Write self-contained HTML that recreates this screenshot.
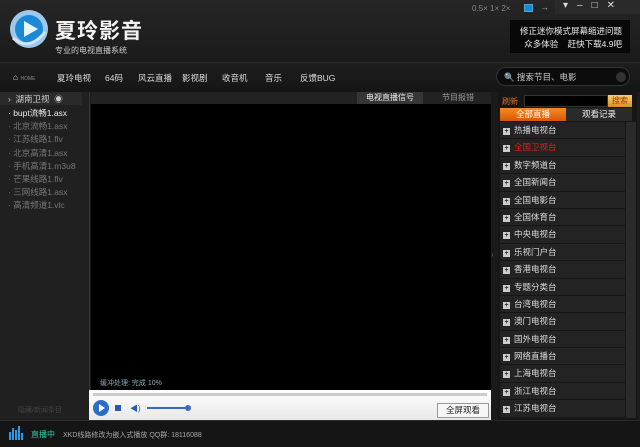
<!DOCTYPE html>
<html><head><meta charset="utf-8"><style>
*{margin:0;padding:0;box-sizing:border-box}
body{width:640px;height:447px;background:#1c1c1c;font-family:"Liberation Sans","Noto Sans CJK SC",sans-serif;color:#ddd;position:relative;overflow:hidden;font-size:9px}
.a{position:absolute}
.n{position:absolute;top:72px;font-size:8.5px;color:#ddd;white-space:nowrap}
</style></head><body>
<div class="a" style="left:0;top:0;width:640px;height:62px;background:linear-gradient(#262626,#1a1a1a)"></div>
<svg class="a" style="left:8px;top:8px" width="42" height="42"><circle cx="21" cy="21" r="19" fill="#9fc8e8"/><circle cx="21" cy="21" r="14" fill="#1a8ad8"/><path d="M16 13 L30 21 L16 29Z" fill="#e8f4ff"/><path d="M5 30 Q21 44 37 24" stroke="#cfe6f8" stroke-width="3" fill="none"/></svg>
<div class="a" style="left:55px;top:15px;font-size:21px;color:#f2f2f2;font-weight:bold;letter-spacing:1px">夏玲影音</div>
<div class="a" style="left:55px;top:45px;font-size:8px;color:#ccc">专业的电视直播系统</div>
<div class="a" style="left:472px;top:4px;font-size:8px;color:#888">0.5× 1× 2×</div>
<div class="a" style="left:524px;top:4px;width:9px;height:8px;background:#1a88d8;border:1px solid #5ac"></div>
<div class="a" style="left:540px;top:2px;color:#aaa;font-size:9px">→</div>
<div class="a" style="left:555px;top:0;width:85px;height:14px;background:#2a2a2a;color:#ddd;font-size:10px;padding-left:8px;letter-spacing:9px">▾–□✕</div>
<div class="a" style="left:510px;top:20px;width:120px;height:33px;background:#080808;color:#eee;font-size:8.5px;text-align:right;padding:5px 8px;line-height:13px">修正迷你模式屏幕缩进问题<br>众多体验 &nbsp;&nbsp;&nbsp;赶快下载4.9吧</div>
<div class="a" style="left:0;top:62px;width:640px;height:30px;background:linear-gradient(#1e1e1e,#151515);border-top:1px solid #2a2a2a"></div>
<div class="n" style="left:13px">⌂ <span style="font-size:5px;color:#888">HOME</span></div>
<div class="n" style="left:57px">夏玲电视</div><div class="n" style="left:105px">64码</div><div class="n" style="left:138px">风云直播</div><div class="n" style="left:182px">影视剧</div><div class="n" style="left:222px">收音机</div><div class="n" style="left:265px">音乐</div><div class="n" style="left:300px">反馈BUG</div>
<div class="a" style="left:496px;top:67px;width:134px;height:19px;border-radius:10px;background:#0c0c0c;border:1px solid #333;font-size:8.5px;color:#ccc;padding:3px 7px">🔍 搜索节目、电影</div>
<div class="a" style="left:616px;top:72px;width:10px;height:10px;border-radius:5px;background:#333"></div>
<div class="a" style="left:0;top:92px;width:90px;height:328px;background:#202020;border-right:1px solid #333"></div>
<div class="a" style="left:0;top:92px;width:82px;height:13px;background:#2a2a2a;font-size:8.5px;color:#ccc;padding:1px 8px">›&nbsp; 湖南卫视 &nbsp;◉</div>
<div class="a" style="left:8px;top:107px;font-size:8.5px;line-height:13.2px;color:#777">
<div style="color:#eee">· bupt流畅1.asx</div><div>· 北京流畅1.asx</div><div>· 江苏线路1.flv</div><div>· 北京高清1.asx</div><div>· 手机高清1.m3u8</div><div>· 芒果线路1.flv</div><div>· 三网线路1.asx</div><div>· 高清频道1.vlc</div></div>
<div class="a" style="left:18px;top:405px;font-size:7px;color:#444">隐藏/新闻条目</div>
<div class="a" style="left:91px;top:92px;width:400px;height:12px;background:#222"></div>
<div class="a" style="left:357px;top:92px;width:66px;height:12px;background:#363636;font-size:8px;color:#eee;text-align:center">电视直播信号</div>
<div class="a" style="left:426px;top:92px;width:64px;height:12px;font-size:8px;color:#999;text-align:center">节目报错</div>
<div class="a" style="left:91px;top:104px;width:400px;height:286px;background:#000"></div>
<div class="a" style="left:100px;top:378px;font-size:7px;color:#8ab">缓冲处理: 完成 10%</div>
<div class="a" style="left:89px;top:390px;width:402px;height:30px;background:linear-gradient(#fff,#e8e8e8)"></div>
<div class="a" style="left:93px;top:393px;width:394px;height:3px;background:#ccc"></div>
<div class="a" style="left:93px;top:400px;width:16px;height:16px;border-radius:8px;background:#2a6ec8"></div>
<div class="a" style="left:99px;top:404px;border-left:6px solid #fff;border-top:4px solid transparent;border-bottom:4px solid transparent"></div>
<div class="a" style="left:115px;top:405px;width:6px;height:6px;background:#2a5ab0"></div>
<div class="a" style="left:130px;top:403px;color:#2a5ab0;font-size:8px">◀)</div>
<div class="a" style="left:147px;top:407px;width:42px;height:2px;background:#3a6ac0"></div>
<div class="a" style="left:185px;top:405px;width:6px;height:6px;border-radius:3px;background:#3a6ac0"></div>
<div class="a" style="left:437px;top:403px;width:52px;height:15px;border:1px solid #999;background:#f6f6f6;color:#222;font-size:8.5px;text-align:center;line-height:13px">全屏观看</div>
<div class="a" style="left:491px;top:92px;width:7px;height:328px;background:#1a1a1a;color:#666;font-size:7px;padding-top:160px">›</div>
<div class="a" style="left:498px;top:92px;width:139px;height:328px;background:#161616"></div>
<div class="a" style="left:502px;top:96px;color:#e07020;font-size:8px">刷新</div>
<div class="a" style="left:524px;top:95px;width:84px;height:12px;background:#000;border:1px solid #333"></div>
<div class="a" style="left:608px;top:95px;width:24px;height:12px;background:linear-gradient(#f8d070,#d89020);color:#a04010;font-size:8px;text-align:center">搜索</div>
<div class="a" style="left:500px;top:108px;width:66px;height:13px;background:linear-gradient(#f88a20,#d85808);color:#fff;font-size:8.5px;text-align:center">全部直播</div>
<div class="a" style="left:566px;top:108px;width:66px;height:13px;background:#2a2a2a;color:#eee;font-size:8.5px;text-align:center">观看记录</div>
<div class="a" style="left:626px;top:122px;width:10px;height:296px;background:#2a2a2a"></div>
<div class="a" style="left:500px;top:122px;width:125px;font-size:8.5px;color:#ddd">
<style>.i{height:16.4px;margin-bottom:1px;background:#232323;padding:2px 0 0 3px;white-space:nowrap}.i b{display:inline-block;width:7px;height:7px;background:#ccc;color:#333;font-size:7px;line-height:7px;text-align:center;margin-right:4px}</style>
<div class="i"><b>+</b>热播电视台</div><div class="i" style="color:#e02020"><b>+</b>全国卫视台</div><div class="i"><b>+</b>数字频道台</div><div class="i"><b>+</b>全国新闻台</div><div class="i"><b>+</b>全国电影台</div><div class="i"><b>+</b>全国体育台</div><div class="i"><b>+</b>中央电视台</div><div class="i"><b>+</b>乐视门户台</div><div class="i"><b>+</b>香港电视台</div><div class="i"><b>+</b>专题分类台</div><div class="i"><b>+</b>台湾电视台</div><div class="i"><b>+</b>澳门电视台</div><div class="i"><b>+</b>国外电视台</div><div class="i"><b>+</b>网络直播台</div><div class="i"><b>+</b>上海电视台</div><div class="i"><b>+</b>浙江电视台</div><div class="i"><b>+</b>江苏电视台</div></div>
<div class="a" style="left:0;top:420px;width:640px;height:27px;background:#151515;border-top:1px solid #2a2a2a"></div>
<svg class="a" style="left:9px;top:426px" width="16" height="14"><rect x="0" y="6" width="2" height="8" fill="#2a9ae8"/><rect x="3" y="2" width="2" height="12" fill="#2a9ae8"/><rect x="6" y="4" width="2" height="10" fill="#2a9ae8"/><rect x="9" y="0" width="2" height="14" fill="#2a9ae8"/><rect x="12" y="7" width="2" height="7" fill="#2a9ae8"/></svg>
<div class="a" style="left:31px;top:429px;color:#2ad0b0;font-size:8px">直播中</div>
<div class="a" style="left:63px;top:430px;color:#aaa;font-size:7px">XKD线路修改为嵌入式播放 QQ群: 18116088</div>
</body></html>
